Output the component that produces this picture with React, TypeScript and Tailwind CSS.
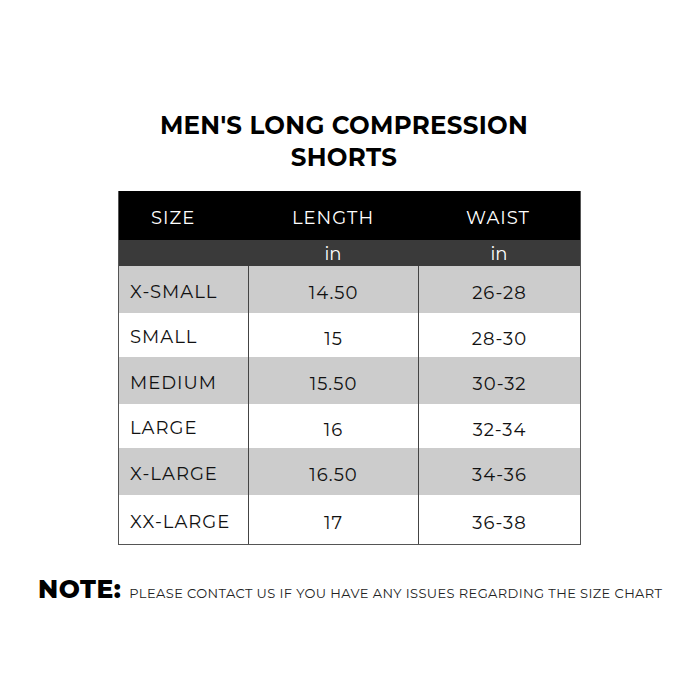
import React from "react";

const rows = [
  { size: "X-SMALL", len: "14.50", waist: "26-28", gray: true, h: "h-[47px]" },
  { size: "SMALL", len: "15", waist: "28-30", gray: false, h: "h-[44px]" },
  { size: "MEDIUM", len: "15.50", waist: "30-32", gray: true, h: "h-[47px]" },
  { size: "LARGE", len: "16", waist: "32-34", gray: false, h: "h-[44px]" },
  { size: "X-LARGE", len: "16.50", waist: "34-36", gray: true, h: "h-[47px]" },
  { size: "XX-LARGE", len: "17", waist: "36-38", gray: false, h: "h-[49px]" },
];

export default function App() {
  return (
    <div
      className="w-[700px] h-[700px] bg-white text-[#111] flex flex-col items-center"
      style={{ fontFamily: '"Montserrat", "Noto Sans", "Open Sans", sans-serif' }}
    >
      <h1 className="mt-[109px] ml-[-12px] text-center font-bold text-[24.5px] leading-[32px] tracking-[0.3px] text-black">
        MEN'S LONG COMPRESSION
        <br />
        SHORTS
      </h1>
      <div className="mt-[18px] w-[463px] ml-[-1px] flex flex-col border-l border-r border-b border-[#555]">
        <div className="h-[49px] bg-black text-white grid grid-cols-[129px_170px_1fr] items-center text-[18px] tracking-[1px]">
          <div className="pl-[32px] pt-[5px]">SIZE</div>
          <div className="text-center pt-[5px]">LENGTH</div>
          <div className="text-center pt-[5px] pr-[2px]">WAIST</div>
        </div>
        <div className="h-[26px] bg-[#3a3a3a] text-white grid grid-cols-[129px_170px_1fr] items-center text-[18px]">
          <div></div>
          <div className="text-center pt-[1px]">in</div>
          <div className="text-center pt-[1px]">in</div>
        </div>
        {rows.map((r) => (
          <div
            key={r.size}
            className={`${r.h} grid grid-cols-[129px_170px_1fr] text-[18px] tracking-[1px] ${r.gray ? "bg-[#cccccc]" : "bg-white"}`}
          >
            <div className="pl-[11px] flex items-center pt-[5px]">{r.size}</div>
            <div className="border-l border-[#444] flex items-center justify-center pt-[8px]">{r.len}</div>
            <div className="border-l border-[#444] flex items-center justify-center pt-[8px]">{r.waist}</div>
          </div>
        ))}
      </div>
      <div className="mt-[26px] w-full pl-[38px] flex items-baseline">
        <span className="font-extrabold text-[25px] tracking-[0.5px] text-black">NOTE:</span>
        <span className="ml-[8px] text-[13px] tracking-[0.4px] text-[#222]">
          PLEASE CONTACT US IF YOU HAVE ANY ISSUES REGARDING THE SIZE CHART
        </span>
      </div>
    </div>
  );
}
